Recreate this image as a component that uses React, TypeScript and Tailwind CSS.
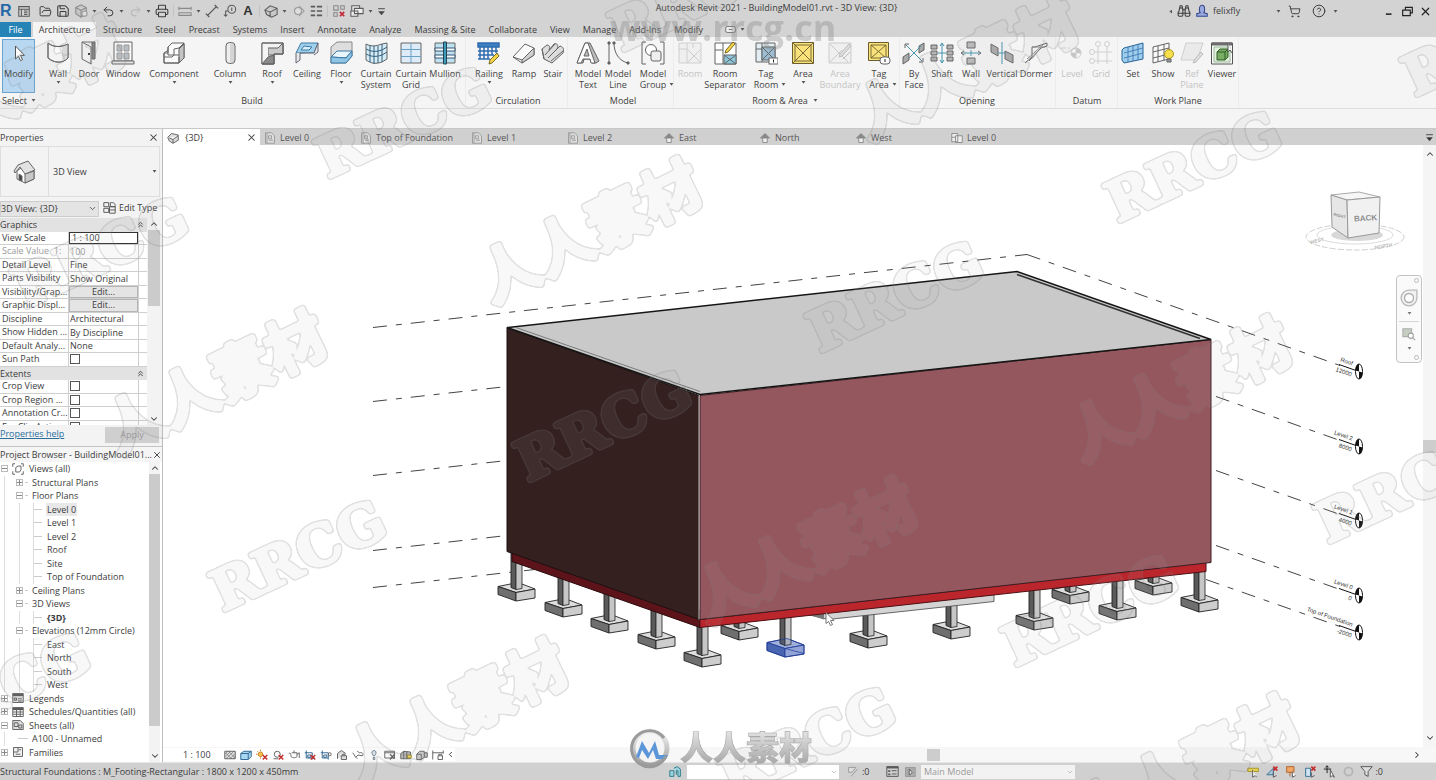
import React from "react";
import { ChevronDown, ChevronUp, ChevronRight, ChevronLeft, X, Undo2, Redo2, Printer, FolderOpen, Save, ShoppingCart, Binoculars, CircleHelp, ChevronsUp } from "lucide-react";

type Node = React.ReactNode;

/* ---------- small building blocks ---------- */

const Caret = ({ className = "" }: { className?: string }) => (
  <svg viewBox="0 0 6 4" className={`h-[3px] w-[5px] shrink-0 ${className}`} aria-hidden="true">
    <path d="M.5 0h5L3 3.500z" fill="#555" />
  </svg>
);

const Glyph = ({ children, size = "h-4 w-4" }: { children: Node; size?: string }) => (
  <svg viewBox="0 0 16 16" className={`${size} shrink-0`} fill="none" stroke="#5a5a5a" strokeWidth="1.2" aria-hidden="true">
    {children}
  </svg>
);

/* ---------- ribbon icons, drawn on a 24 unit grid ---------- */

const icons: Record<string, Node> = {
  modify: <path d="M8.500 5v13l3-2.800 2 4.500 2-1-2-4.300h4z" fill="#fff" stroke="#555" />,
  wall: (
    <>
      <path d="M2 2c6 5 14 4 20 1v14c-6 6-14 5-20 0z" fill="#fafafa" />
      <path d="M16 6l6-3v14c-2 2-4 3-6 4z" fill="#ddd" stroke="none" />
      <path d="M2 2c6 5 14 4 20 1v14c-6 6-14 5-20 0z" />
    </>
  ),
  door: (
    <>
      <path d="M5 1h13v17h-3V1" fill="#888" />
      <path d="M5 1l9 5v17l-9-5z" fill="#f5f5f5" />
      <path d="M11 13h2" stroke="#333" strokeWidth="2" />
    </>
  ),
  window: (
    <>
      <path d="M3 1h18v19H3z" fill="#fafafa" />
      <path d="M6 4h5v6H6zM13 4h5v6h-5zM6 12h5v6H6zM13 12h5v6h-5z" fill="#b9bec4" stroke="#999" />
      <path d="M1 20h22v3H1z" fill="#e6e6e6" />
    </>
  ),
  component: (
    <>
      <path d="M2 12h4V6l4-4h12v15l-5 5H2z" fill="#fafafa" />
      <path d="M17 8l5-5v14l-5 5z" fill="#c4c4c4" />
      <path d="M2 12v10h15v-6M2 12l3-2h1M6 6v8h6V8M12 14l-2 2H2M12 8l5-1 5-5M12 14h5" />
    </>
  ),
  column: (
    <>
      <rect x="8" y="1.500" width="9" height="21" rx="3.500" fill="#eee" />
      <path d="M13 2v20M15 3v18" stroke="#bbb" />
    </>
  ),
  roof: (
    <>
      <path d="M2 2h21v11h-9v10H2z" fill="#f2f2f2" />
      <path d="M8 7h10l5-5v11h-9v1l-6 0z" fill="#c9c9c9" />
      <path d="M2 23l6-6V7l-6-5z" fill="#f4f4f4" stroke="none" />
      <path d="M2 23l6-7 6-2v9z" fill="#8a8a8a" />
      <path d="M2 2h21v11h-9v10H2z" />
    </>
  ),
  ceiling: (
    <>
      <path d="M1 12l5-10h17l-4 10z" fill="#9fd0ec" stroke="#3c79a4" />
      <path d="M1 12v10l4-3v-7M5 12h14l4-10v9l-4 3" fill="#e8e8e8" stroke="#667" />
      <path d="M6 9l3-4 8 1-3 3z" fill="#d8effa" stroke="#3c79a4" />
    </>
  ),
  floor: (
    <>
      <path d="M2 16V6l6-5h15v14l-6 7H2z" fill="#dedede" stroke="#888" />
      <path d="M2 16l6-6h15l-6 7z" fill="#e8f5fb" stroke="#3c79a4" />
      <path d="M2 16v6h15l6-7v-5l-6 7z" fill="#8fc6e6" stroke="#3c79a4" />
    </>
  ),
  curtainSystem: (
    <>
      <path d="M2 3c6 3 10 2 16 0l5-1v16l-5 3c-6 2-10 2-16-2z" fill="#d5ecf7" />
      <path d="M18 3v18M6 4v17M10 5v18M14 5v17M2 8c6 3 10 3 16 1l5-3M2 13c6 3 10 3 16 1l5-3" stroke="#36607c" />
    </>
  ),
  curtainGrid: (
    <>
      <path d="M2 2h20v20H2z" fill="#ddecf8" />
      <path d="M12 2v20M2 8.500h20M2 15.500h20" stroke="#6aa0c4" />
    </>
  ),
  mullion: (
    <>
      <path d="M2 2h20v20H2z" fill="#bfe2f0" />
      <path d="M2 7h20v3H2zM2 14h20v3H2z" fill="#fff" stroke="#357" />
      <path d="M10.500 1h3v22h-3z" fill="#3f9cb8" stroke="#245" />
    </>
  ),
  railing: (
    <>
      <path d="M1 2h21v4H1zM3 6v12M7 6v12M11 6v12M15 6v8M19 6v6M1 10h20M1 14h16M1 18h12" fill="#3f7fc4" stroke="#2f6cae" strokeWidth="1.500" />
      <path d="M12 23l1-4 7-7 2 3-7 7z" fill="#f3d34a" stroke="#7a6a20" />
    </>
  ),
  ramp: (
    <>
      <path d="M1 16l12-13 9 4v7L10 22z" fill="#fafafa" />
      <path d="M10 22v-3L22 7v7z" fill="#d0d0d0" />
      <path d="M1 16l9 3" />
    </>
  ),
  stair: (
    <>
      <path d="M1 8l5-4c3 0 3 3 2 5l5-6c3-1 5 1 3 5l3-3c4 1 4 4 3 7L11 22l-8-4z" fill="#ddd" />
      <path d="M4 14L14 3M7 17L19 5M10 20L22 10M1 8l2 10" />
    </>
  ),
  modelText: (
    <>
      <path d="M1 22L9 2h5l9 18-3 2h-4l-2-4H8l-1 4z" fill="#bbb" />
      <path d="M1 22L9 2l3 0 7 20h-4l-1-4H7l-2 4zM8 15h5l-2-7z" fill="#fff" />
    </>
  ),
  modelLine: (
    <>
      <path d="M3 2v20M8 2c0 10 5 18 14 20" />
      <path d="M2 1h2v2H2zM2 21h2v2H2zM7 1h2v2H7zM21 21h2v2h-2z" fill="#555" />
    </>
  ),
  modelGroup: (
    <>
      <path d="M5 1H1v22h4M19 1h4v22h-4" />
      <circle cx="10" cy="9" r="5.500" fill="#fff" />
      <rect x="10" y="10" width="10" height="10" rx="2" fill="#eee" />
    </>
  ),
  room: <path d="M1 2h22v20H1zM9 2v20M1 8h8M9 8l14 14M23 8L9 22M15 2v5" fill="#efefef" stroke="#cfcfcf" />,
  roomSep: (
    <>
      <path d="M2 2h21v21H2zM2 9h8M10 2v21" fill="#fff" />
      <path d="M11 14h12v9H11z" fill="#8cc7dc" />
      <path d="M11 23l12-9M11 14l12 9" />
      <path d="M12 12l1-3 7-8 2 2-7 8z" fill="#f3d34a" stroke="#7a6a20" />
    </>
  ),
  tagRoom: (
    <>
      <path d="M2 2h19v19H2zM2 8h6M8 2v19" fill="#e3edf4" />
      <path d="M8 6h13v13H8z" fill="#9dbdd3" />
      <path d="M8 6l13 13M21 6L8 19" />
      <rect x="15" y="17" width="9" height="6" fill="#fff" />
      <path d="M19.500 18.500v3" stroke="#222" />
    </>
  ),
  area: (
    <>
      <path d="M1.500 1.500h21v21h-21z" fill="#f9e27c" stroke="#6b5e2c" />
      <path d="M4 4h16v16H4zM2 2l20 20M22 2L2 22" stroke="#6b5e2c" strokeWidth=".9" />
    </>
  ),
  areaBoundary: (
    <>
      <path d="M1 2h22v20H1zM2 3l18 18M14 9L2 21" fill="#efefef" stroke="#cbcbcb" />
      <path d="M11 16l1-3 9-10 2 2-9 10zM15 18l7-7" fill="#ddd" stroke="#bdbdbd" />
    </>
  ),
  tagArea: (
    <>
      <path d="M1.500 1.500h20v18h-20z" fill="#f9e27c" stroke="#6b5e2c" />
      <path d="M4 4h15v13H4zM4 4l15 13M19 4L4 17" stroke="#6b5e2c" strokeWidth=".9" />
      <rect x="13" y="16" width="10" height="7" rx="3" fill="#fff" />
      <path d="M18 18v3" stroke="#222" />
    </>
  ),
  byFace: (
    <>
      <path d="M1 16l6-4v7l-6 4zM17 5l5-3v7l-5 3z" fill="#aaa" />
      <path d="M4 4l16 16M7 17L19 5" stroke="#4794ad" />
      <path d="M3 3h4M3 3v4M21 21h-4M21 21v-4" />
    </>
  ),
  shaft: (
    <>
      <path d="M1 4h6v4H1zM1 10h6v4H1zM1 16h6v4H1zM17 4h6v4h-6zM17 10h6v4h-6zM17 16h6v4h-6z" fill="#b5b5b5" />
      <path d="M12 2v20M8 12h8" stroke="#4794ad" />
      <path d="M10 5l2-3 2 3M10 19l2 3 2-3" stroke="#4794ad" />
    </>
  ),
  openWall: (
    <>
      <path d="M8 1h8v6H8zM8 17h8v6H8z" fill="#bbb" />
      <path d="M3 12h18M12 9v6" stroke="#4794ad" />
      <path d="M5 10l-3 2 3 2M19 10l3 2-3 2" />
    </>
  ),
  vertical: (
    <>
      <path d="M1 3l7 4v8l-7-4zM15 10l8 4v8l-8-4z" fill="#aaa" />
      <path d="M12 1v22M8 12h8" stroke="#4794ad" />
    </>
  ),
  dormer: (
    <>
      <path d="M1 22l7-6V6h3l12-4v3l-6 2L5 20" />
      <path d="M8 6h13M3 18L20 3" stroke="#888" />
    </>
  ),
  level: (
    <g stroke="#cfcfcf">
      <path d="M1 7h5M8 7h2" />
      <circle cx="16" cy="12" r="5" />
      <path d="M16 7v5h5a5 5 0 0 0-5-5zM16 17v-5h-5a5 5 0 0 0 5 5z" fill="#c4c4c4" />
    </g>
  ),
  grid: (
    <g stroke="#cfcfcf">
      <circle cx="9" cy="3" r="2.500" />
      <circle cx="18" cy="3" r="2.500" />
      <circle cx="3" cy="11" r="2.500" />
      <circle cx="3" cy="20" r="2.500" />
      <path d="M9 6v17M18 6v17M6 11h17M6 20h17" />
    </g>
  ),
  set: (
    <>
      <path d="M3 7l19-5v16L3 22l-2-3V9z" fill="#9fcdee" stroke="#27659a" />
      <path d="M7 6v15M12 5v15M17 3v16M3 12l19-5M3 17l19-5" stroke="#3f7cb0" strokeWidth=".9" />
    </>
  ),
  show: (
    <>
      <path d="M2 6l16-4v16L2 22zM7 5v16M13 3v16M2 11l16-4M2 17l16-4" fill="#fafafa" />
      <circle cx="18" cy="13" r="4.500" fill="#f7e04c" stroke="#aa9420" />
      <path d="M16 18h4v3h-4z" fill="#999" />
    </>
  ),
  refPlane: (
    <>
      <path d="M6 2h17l-6 17H1z" fill="#eaeaea" stroke="#cfcfcf" />
      <path d="M13 22l2-4 6-7 2 2-7 8z" fill="#ddd" stroke="#bdbdbd" />
    </>
  ),
  viewer: (
    <>
      <path d="M1.500 2h21v21h-21z" fill="#fafafa" stroke="#555" />
      <path d="M2 2h20v2H2z" fill="#777" />
      <path d="M4 6h16v15H4z" fill="#e1efdc" stroke="#9b9" />
      <path d="M7 11l3-3h8v8l-3 3H7z" fill="#77ac62" stroke="#2f5c24" />
      <path d="M7 11h8v8M15 11l3-3" stroke="#2f5c24" />
      <path d="M18 2v9l2-2 2 3" stroke="#555" fill="#fff" />
    </>
  ),
};

type Tool = { icon: string; label: string[]; w: string; drop?: "below" | "side"; off?: boolean };
type Panel = { title: string; pad: string; tools: Tool[]; menu?: boolean };

const panels: Panel[] = [
  {
    title: "Build", pad: "pl-[5px] pr-[3px]",
    tools: [
      { icon: "wall", label: ["Wall"], w: "w-8", drop: "below" },
      { icon: "door", label: ["Door"], w: "w-[30px]" },
      { icon: "window", label: ["Window"], w: "w-[38px]" },
      { icon: "component", label: ["Component"], w: "w-16", drop: "below" },
      { icon: "column", label: ["Column"], w: "w-12", drop: "below" },
      { icon: "roof", label: ["Roof"], w: "w-9", drop: "below" },
      { icon: "ceiling", label: ["Ceiling"], w: "w-[34px]" },
      { icon: "floor", label: ["Floor"], w: "w-[34px]", drop: "below" },
      { icon: "curtainSystem", label: ["Curtain", "System"], w: "w-9" },
      { icon: "curtainGrid", label: ["Curtain", "Grid"], w: "w-[34px]" },
      { icon: "mullion", label: ["Mullion"], w: "w-[34px]" },
    ],
  },
  {
    title: "Circulation", pad: "pl-1 pr-px",
    tools: [
      { icon: "railing", label: ["Railing"], w: "w-[38px]", drop: "below" },
      { icon: "ramp", label: ["Ramp"], w: "w-8" },
      { icon: "stair", label: ["Stair"], w: "w-[26px]" },
    ],
  },
  {
    title: "Model", pad: "pl-[5px]",
    tools: [
      { icon: "modelText", label: ["Model", "Text"], w: "w-[30px]" },
      { icon: "modelLine", label: ["Model", "Line"], w: "w-[30px]" },
      { icon: "modelGroup", label: ["Model", "Group"], w: "w-10", drop: "side" },
    ],
  },
  {
    title: "Room & Area", pad: "pr-[3px]", menu: true,
    tools: [
      { icon: "room", label: ["Room"], w: "w-8", off: true },
      { icon: "roomSep", label: ["Room", "Separator"], w: "w-[38px]" },
      { icon: "tagRoom", label: ["Tag", "Room"], w: "w-11", drop: "side" },
      { icon: "area", label: ["Area"], w: "w-[30px]", drop: "below" },
      { icon: "areaBoundary", label: ["Area", "Boundary"], w: "w-11", off: true },
      { icon: "tagArea", label: ["Tag", "Area"], w: "w-[34px]", drop: "side" },
    ],
  },
  {
    title: "Opening", pad: "pr-px",
    tools: [
      { icon: "byFace", label: ["By", "Face"], w: "w-7" },
      { icon: "shaft", label: ["Shaft"], w: "w-7" },
      { icon: "openWall", label: ["Wall"], w: "w-[30px]" },
      { icon: "vertical", label: ["Vertical"], w: "w-8" },
      { icon: "dormer", label: ["Dormer"], w: "w-9" },
    ],
  },
  {
    title: "Datum", pad: "pl-[2px] pr-px",
    tools: [
      { icon: "level", label: ["Level"], w: "w-7", off: true },
      { icon: "grid", label: ["Grid"], w: "w-[30px]", off: true },
    ],
  },
  {
    title: "Work Plane", pad: "",
    tools: [
      { icon: "set", label: ["Set"], w: "w-[30px]" },
      { icon: "show", label: ["Show"], w: "w-[30px]" },
      { icon: "refPlane", label: ["Ref", "Plane"], w: "w-7", off: true },
      { icon: "viewer", label: ["Viewer"], w: "w-8" },
    ],
  },
];

function ToolButton({ tool }: { tool: Tool }) {
  return (
    <button type="button" disabled={tool.off} className={`flex h-[56px] shrink-0 flex-col items-center leading-[11px] ${tool.w} ${tool.off ? "text-[#c4c4c4]" : "text-[#444]"}`}>
      <svg viewBox="0 0 24 24" className="mt-1 mb-[3px] h-6 w-6 shrink-0" fill="none" stroke="#646464" aria-hidden="true">
        {icons[tool.icon]}
      </svg>
      {tool.label.map((line, i) => (
        <span key={line} className="flex items-center justify-center whitespace-nowrap">
          {line}
          {tool.drop === "side" && i === 1 && <Caret className="-mr-2 ml-[3px]" />}
        </span>
      ))}
      {tool.drop === "below" && <Caret className="mt-[2px]" />}
    </button>
  );
}

function Ribbon() {
  return (
    <div className="flex h-[72px] shrink-0 border-b border-[#dcdcdc] bg-[#f5f5f5]">
      <div className="flex w-[37px] shrink-0 flex-col pl-[2px]">
        <button type="button" className="mt-[2px] flex h-[54px] w-[33px] flex-col items-center border border-[#6ba3cf] bg-[#b8d8f2] leading-[11px]">
          <svg viewBox="0 0 24 24" className="mt-px mb-[3px] h-6 w-6 shrink-0" fill="none" aria-hidden="true">{icons.modify}</svg>
          Modify
        </button>
        <button type="button" className="flex h-[15px] items-center gap-1 leading-[15px] whitespace-nowrap">Select<Caret /></button>
      </div>
      {panels.map((p) => (
        <section key={p.title} aria-label={p.title} className={`flex shrink-0 flex-col border-r border-[#ececec] ${p.pad}`}>
          <div className="flex">{p.tools.map((t) => <ToolButton key={t.icon} tool={t} />)}</div>
          <div className="flex h-[15px] items-center justify-center gap-[5px] leading-[15px]">
            {p.title}
            {p.menu && <Caret />}
          </div>
        </section>
      ))}
    </div>
  );
}

/* ---------- title bar ---------- */

const Tip = ({ label, children, w = "w-[18px]" }: { label: string; children?: Node; w?: string }) => (
  <button type="button" aria-label={label} className={`flex h-[18px] shrink-0 items-center justify-center ${w}`}>{children}</button>
);
const Drop = ({ label }: { label: string }) => <Tip label={label} w="w-[9px]"><Caret /></Tip>;
const Rule = () => <span className="mx-[2px] h-3 w-px shrink-0 bg-[#c2c2c2]" />;

function TitleBar() {
  return (
    <header className="flex h-[22px] shrink-0 items-center bg-[#d3d3d3]">
      <div className="flex items-center">
        <span className="w-[15px] font-['Liberation_Sans'] text-[16px] leading-[18px] font-bold text-[#2468a8]">R</span>
        <Tip label="Home"><Glyph size="h-[14px] w-[14px]"><path d="M2 3h12v11H2zM2 6h12M5 6v8M8 8h4M8 10h4M8 12h4" /></Glyph></Tip>
        <span className="w-[3px]" />
        <Tip label="Open"><FolderOpen size={13} strokeWidth={1.8} /></Tip>
        <Tip label="Save"><Save size={14} strokeWidth={1.8} /></Tip>
        <Tip label="Synchronize"><Glyph size="h-[14px] w-[14px]"><path d="M2 4l6-3 6 3v7l-6 4-6-4zM2 4l6 3 6-3M8 7v8" stroke="#8a8a8a" fill="#c4c4c4" /><circle cx="12" cy="11" r="3" fill="#ddd" stroke="#9a9a9a" /></Glyph></Tip>
        <Drop label="Synchronize options" />
        <Tip label="Undo"><Undo2 size={13} strokeWidth={1.8} /></Tip>
        <Drop label="Undo history" />
        <Tip label="Redo"><Redo2 size={13} strokeWidth={1.8} color="#b2b2b2" /></Tip>
        <Drop label="Redo history" />
        <Tip label="Print"><Printer size={14} strokeWidth={1.8} /></Tip>
        <Rule />
        <Tip label="Measure"><Glyph size="h-[14px] w-[14px]"><path d="M1 3v4M15 3v4M1 5h14M1 10h14v3H1z" stroke="#8a8a8a" /></Glyph></Tip>
        <Drop label="Measure options" />
        <Tip label="Aligned dimension"><Glyph size="h-[14px] w-[14px]"><path d="M3 13L13 3M1 11l4 4M11 1l4 4" strokeWidth="1.600" /></Glyph></Tip>
        <Tip label="Tag by category"><Glyph size="h-[14px] w-[14px]"><circle cx="10" cy="6" r="4.500" /><path d="M10 4v4M6 8H3v5M1 12l2 2 2-2" /></Glyph></Tip>
        <Tip label="Text"><span className="font-['Liberation_Sans'] text-[13px] font-bold text-[#333]">A</span></Tip>
        <Rule />
        <Tip label="Default 3D view"><Glyph size="h-[14px] w-[14px]"><path d="M1 7l6-5 8 3v7l-6 3-6-3zM1 7l6 2 8-4M7 9v6" fill="#c8c8c8" /></Glyph></Tip>
        <Drop label="3D view options" />
        <Tip label="Section"><Glyph size="h-[14px] w-[14px]"><circle cx="8" cy="8" r="4" fill="#ddd" stroke="#999" /><path d="M9 2l6 6-6 6" stroke="#999" /></Glyph></Tip>
        <Tip label="Thin lines"><Glyph size="h-[14px] w-[14px]"><path d="M2 3h5M9 3h6M2 8h5M9 8h6M2 13h5M9 13h6" strokeWidth="1.800" /></Glyph></Tip>
        <Rule />
        <Tip label="Close inactive views"><Glyph size="h-[14px] w-[14px]"><path d="M2 2h5v5H2zM10 2h4v4h-4zM2 10h4v4H2z" stroke="#888" /><path d="M9 9l5 5M14 9l-5 5" stroke="#c22a3a" strokeWidth="2" /></Glyph></Tip>
        <Tip label="Switch windows"><Glyph size="h-[14px] w-[14px]"><path d="M2 8V2h9v3M5 5h10v6H5zM1 8h8v6H1z" fill="#eee" /></Glyph></Tip>
        <Drop label="Windows list" />
        <Tip label="Customize toolbar" w="w-3"><Glyph size="h-[9px] w-[9px]"><path d="M2 3h12" strokeWidth="2" /><path d="M3 8h10l-5 6z" fill="#444" /></Glyph></Tip>
      </div>
      <h1 className="mb-[6px] min-w-0 flex-1 truncate text-center leading-[14px]">Autodesk Revit 2021 - BuildingModel01.rvt - 3D View: {"{3D}"}</h1>
      <div className="flex items-center pr-[2px]">
        <Tip label="Collapse search" w="w-[9px]"><Caret className="rotate-90" /></Tip>
        <Tip label="Search"><Binoculars size={14} strokeWidth={1.8} /></Tip>
        <Tip label="Account"><Glyph size="h-[14px] w-[14px]"><path d="M5 6c0-6 6-6 6 0 0 3-1 4-1 4l4 1v3H2v-3l4-1S5 9 5 6z" fill="#9aa9dd" stroke="#34478e" /></Glyph></Tip>
        <button type="button" className="flex h-[18px] w-[70px] items-center justify-between pl-[2px]">felixfly<Caret /></button>
        <Tip label="App store" w="w-[26px]"><ShoppingCart size={13} strokeWidth={1.7} /></Tip>
        <Tip label="Help" w="w-6"><CircleHelp size={14} strokeWidth={1.7} /></Tip>
        <Drop label="Help menu" />
        <span className="w-10" />
        <Tip label="Minimize"><Glyph size="h-[10px] w-[10px]"><path d="M3 13h9" strokeWidth="2.500" stroke="#222" /></Glyph></Tip>
        <Tip label="Restore"><Glyph size="h-[11px] w-[11px]"><path d="M5 5V2h10v8h-3M1 6h11v8H1z" stroke="#222" strokeWidth="1.700" /></Glyph></Tip>
        <Tip label="Close"><X size={13} strokeWidth={2.2} color="#222" /></Tip>
      </div>
    </header>
  );
}

const menu = ["Structure", "Steel", "Precast", "Systems", "Insert", "Annotate", "Analyze", "Massing & Site", "Collaborate", "View", "Manage", "Add-Ins", "Modify"];

function MenuTabs() {
  return (
    <nav className="flex h-[15px] shrink-0 items-stretch bg-[#d3d3d3] leading-[15px] whitespace-nowrap">
      <button type="button" className="mr-[2px] w-[31px] bg-[#2583b6] text-white">File</button>
      <button type="button" className="w-[63px] bg-[#f5f5f5]">Architecture</button>
      {menu.map((m) => <button key={m} type="button" className="pr-[6px] pl-[7px]">{m}</button>)}
      <button type="button" aria-label="Ribbon display" className="ml-4 flex items-center gap-1">
        <svg viewBox="0 0 12 8" className="h-[7px] w-[11px]" fill="#eee" stroke="#666"><rect x=".5" y=".5" width="11" height="7" rx="2" /><path d="M4 4h4" /></svg>
        <Caret />
      </button>
    </nav>
  );
}

/* ---------- properties palette ---------- */

type Prop = { name: string; kind: "head" | "scale" | "off" | "text" | "edit" | "check"; value?: string };
const props: Prop[] = [
  { name: "Graphics", kind: "head" },
  { name: "View Scale", kind: "scale", value: "1 : 100" },
  { name: "Scale Value  1:", kind: "off", value: "100" },
  { name: "Detail Level", kind: "text", value: "Fine" },
  { name: "Parts Visibility", kind: "text", value: "Show Original" },
  { name: "Visibility/Grap...", kind: "edit" },
  { name: "Graphic Displ...", kind: "edit" },
  { name: "Discipline", kind: "text", value: "Architectural" },
  { name: "Show Hidden ...", kind: "text", value: "By Discipline" },
  { name: "Default Analy...", kind: "text", value: "None" },
  { name: "Sun Path", kind: "check" },
  { name: "Extents", kind: "head" },
  { name: "Crop View", kind: "check" },
  { name: "Crop Region ...", kind: "check" },
  { name: "Annotation Cr...", kind: "check" },
  { name: "Far Clip Active", kind: "check" },
];

function PropRow({ p }: { p: Prop }) {
  const id = `prop-${p.name.replace(/\W+/g, "-")}`;
  if (p.kind === "head")
    return (
      <div className="flex items-center justify-between bg-[#e2e2e2] pr-[2px]">
        {p.name}
        <ChevronsUp size={9} strokeWidth={2.5} />
      </div>
    );
  return (
    <div className={`flex border-b border-[#cfcfcf] bg-white ${p.kind === "off" ? "text-[#999]" : ""}`}>
      <label htmlFor={id} className="w-[69px] shrink-0 border-r border-[#cfcfcf] pl-[2px] whitespace-pre">{p.name}</label>
      <div className="flex w-[70px] shrink-0 items-center border-r border-[#cfcfcf]">
        {p.kind === "edit" ? (
          <button id={id} type="button" className="h-full w-full border border-[#b5b5b5] bg-[#e4e4e4] leading-[10px]">Edit...</button>
        ) : p.kind === "check" ? (
          <input id={id} type="checkbox" className="ml-px h-[10px] w-[10px] appearance-none border border-[#555] bg-white" />
        ) : (
          <input
            id={id}
            defaultValue={p.value}
            disabled={p.kind === "off"}
            className={`h-full w-full min-w-0 bg-white ${p.kind === "scale" ? "border border-[#333] pl-[2px]" : "pl-px"}`}
          />
        )}
      </div>
    </div>
  );
}

const ScrollV = ({ thumb, className = "" }: { thumb: string; className?: string }) => (
  <div className={`flex shrink-0 flex-col items-center bg-[#f3f3f3] ${className}`}>
    <ChevronUp size={10} strokeWidth={2.5} className="my-px shrink-0" />
    <div className={`w-full bg-[#cbcbcb] ${thumb}`} />
    <div className="flex-1" />
    <ChevronDown size={10} strokeWidth={2.5} className="my-px shrink-0" />
  </div>
);

function Properties() {
  return (
    <section aria-label="Properties" className="flex shrink-0 flex-col border-b border-[#c4c4c4] bg-[#f3f3f3]">
      <div className="flex h-[17px] items-center justify-between pr-[3px]">
        <h2>Properties</h2>
        <button type="button" aria-label="Close properties"><X size={11} strokeWidth={2.2} /></button>
      </div>
      <button type="button" className="mr-[2px] flex h-[51px] items-center border border-[#dedede] pr-[2px] text-left">
        <span className="flex h-full w-12 items-center justify-center border-r border-[#dedede]">
          <svg viewBox="0 0 24 24" className="h-6 w-6" fill="none" stroke="#666" aria-hidden="true">
            <path d="M4 11v8l8 4 9-4v-8l-6-8z" fill="#fff" />
            <path d="M12 14v9l9-4v-8z" fill="#c8c8c8" />
            <path d="M1 11l4-6 10-4 7 9-10 4-5-7-5 6z" fill="#e2e2e2" />
            <path d="M6 14l3 2v5l-3-1z" fill="#444" />
          </svg>
        </span>
        <span className="ml-1 flex-1">3D View</span>
        <Caret />
      </button>
      <div className="flex h-[21px] items-center">
        <div className="mt-[2px] flex h-[16px] w-[99px] items-center border border-[#cdcdcd] bg-[#e4e4e4]">
          <select aria-label="Instance" className="h-full min-w-0 flex-1 appearance-none">
            <option>3D View: {"{3D}"}</option>
          </select>
          <ChevronDown size={9} className="mr-px" />
        </div>
        <button type="button" className="ml-1 flex items-center gap-[3px] whitespace-nowrap">
          <Glyph size="h-[13px] w-[13px]"><path d="M1 2h6v5H1zM9 2c5 0 6 0 6 5H9zM1 9h6v5H1zM8 7h7v8H8zM8 11h7" /></Glyph>
          Edit Type
        </button>
      </div>
      <div className="flex h-[207px] overflow-hidden">
        <div className="grid h-[216px] w-[147px] shrink-0 grid-rows-[repeat(16,minmax(0,1fr))] leading-[11px]">
          {props.map((p) => <PropRow key={p.name} p={p} />)}
        </div>
        <ScrollV thumb="h-[76px]" className="ml-px w-[12px]" />
      </div>
      <div className="flex h-[21px] items-center justify-between bg-[#f3f3f3] pr-[3px]">
        <a href="#help" className="mb-1 text-[#2a6f9c] underline">Properties help</a>
        <button type="button" disabled className="mb-[2px] h-[16px] w-[54px] bg-[#cfcfcf] text-[#999]">Apply</button>
      </div>
    </section>
  );
}

/* ---------- project browser ---------- */

type Row = { t: string; d: number; x?: "+" | "-"; icon?: Node; sel?: boolean; bold?: boolean };
const rows: Row[] = [
  { t: "Views (all)", d: 0, x: "-", icon: <path d="M1 5V1h3M12 1h3v4M15 11v4h-3M4 15H1v-4M5 6l3-2h4v5l-2 3H5z" /> },
  { t: "Structural Plans", d: 1, x: "+" },
  { t: "Floor Plans", d: 1, x: "-" },
  { t: "Level 0", d: 2, sel: true },
  { t: "Level 1", d: 2 },
  { t: "Level 2", d: 2 },
  { t: "Roof", d: 2 },
  { t: "Site", d: 2 },
  { t: "Top of Foundation", d: 2 },
  { t: "Ceiling Plans", d: 1, x: "+" },
  { t: "3D Views", d: 1, x: "-" },
  { t: "{3D}", d: 2, bold: true },
  { t: "Elevations (12mm Circle)", d: 1, x: "-" },
  { t: "East", d: 2 },
  { t: "North", d: 2 },
  { t: "South", d: 2 },
  { t: "West", d: 2 },
  { t: "Legends", d: 0, x: "+", icon: <><path d="M1 2h14v12H1z" fill="#ddd" /><path d="M1 4h14" strokeWidth="3" /><path d="M3 8h3v3H3zM8 9h5M8 12h5" /></> },
  { t: "Schedules/Quantities (all)", d: 0, x: "+", icon: <><path d="M1 2h14v12H1zM1 8h14M1 11h14M6 5v9M11 5v9" /><path d="M1 4h14" strokeWidth="3" /></> },
  { t: "Sheets (all)", d: 0, x: "-", icon: <path d="M1 2h10l4 4v8H1zM3 5h5v5H3zM9 8h4v4H9z" fill="#ddd" /> },
  { t: "A100 - Unnamed", d: 1 },
  { t: "Families", d: 0, x: "+", icon: <path d="M2 2h12v12H2zM8 2v6H2M9 5h3M5 11h6" fill="#eee" /> },
];

function TreeRow({ r }: { r: Row }) {
  const box = (
    <span className="flex h-[7px] w-[7px] shrink-0 items-center justify-center border border-[#bbb] bg-white">
      <svg viewBox="0 0 5 5" className="h-[5px] w-[5px]" stroke="#888"><path d={r.x === "+" ? "M0 2.500h5M2.500 0v5" : "M0 2.500h5"} /></svg>
    </span>
  );
  return (
    <li className="flex items-center whitespace-nowrap">
      {r.d === 0 && (
        <>
          <span className="flex w-[12px] shrink-0 pl-px">{box}</span>
          <span className="flex w-[16px] shrink-0"><Glyph size="h-3 w-3">{r.icon}</Glyph></span>
        </>
      )}
      {r.d === 1 && (
        <>
          <span className="ml-[4px] h-full w-px bg-[#ddd]" />
          {r.x ? (
            <>
              <span className="ml-[11px]">{box}</span>
              <span className="mr-[3px] ml-[2px] h-px w-[3px] bg-[#ccc]" />
            </>
          ) : (
            <span className="mr-[3px] ml-[13px] h-px w-[10px] bg-[#ccc]" />
          )}
        </>
      )}
      {r.d === 2 && (
        <>
          <span className="ml-[4px] h-full w-px bg-[#ddd]" />
          <span className="ml-[14px] h-full w-px bg-[#ddd]" />
          <span className="ml-[13px] h-full w-px bg-[#ddd]" />
          <span className="mr-1 h-px w-[8px] bg-[#ccc]" />
        </>
      )}
      <span className={`${r.sel ? "bg-[#e8e8e8] px-px" : "px-px"} ${r.bold ? "font-bold" : ""}`}>{r.t}</span>
    </li>
  );
}

function Browser() {
  return (
    <section aria-label="Project Browser" className="flex min-h-0 flex-1 flex-col bg-white">
      <div className="flex h-[15px] shrink-0 items-center justify-between bg-[#f5f5f5]">
        <h2 className="whitespace-nowrap">Project Browser - BuildingModel01...</h2>
        <button type="button" aria-label="Close project browser" className="shrink-0"><X size={10} strokeWidth={2.2} /></button>
      </div>
      <div className="flex min-h-0 flex-1 overflow-hidden">
        <ul className="grid h-[297px] w-[149px] shrink-0 grid-rows-[repeat(22,minmax(0,1fr))] leading-[13px]">
          {rows.map((r) => <TreeRow key={r.t + r.d} r={r} />)}
        </ul>
        <ScrollV thumb="h-[252px]" className="w-[11px]" />
      </div>
    </section>
  );
}

/* ---------- drawing area ---------- */

const PlanIcon = () => <Glyph size="h-3 w-3"><path d="M2 1h8l4 4v10H2zM4 1v14M6 5h4v4H6zM7 11h5" stroke="#999" fill="#ddd" /></Glyph>;
const ElevIcon = () => <Glyph size="h-3 w-3"><path d="M2 8l6-6 6 6z" fill="#888" stroke="#888" /><path d="M5 8h6v6H5z" fill="#eee" stroke="#888" /></Glyph>;
const views: { t: string; i: Node; w: string }[] = [
  { t: "Level 0", i: <PlanIcon />, w: "w-24" },
  { t: "Top of Foundation", i: <PlanIcon />, w: "w-[111px]" },
  { t: "Level 1", i: <PlanIcon />, w: "w-24" },
  { t: "Level 2", i: <PlanIcon />, w: "w-24" },
  { t: "East", i: <ElevIcon />, w: "w-24" },
  { t: "North", i: <ElevIcon />, w: "w-24" },
  { t: "West", i: <ElevIcon />, w: "w-24" },
  { t: "Level 0", i: <Glyph size="h-3 w-3"><path d="M1 2h8v11H1zM6 5h9v9H6zM1 7h5" fill="#eee" stroke="#888" /></Glyph>, w: "w-24" },
];

function ViewTabs() {
  return (
    <div className="flex h-4 shrink-0 items-stretch bg-[#d0d0d0] leading-4">
      <div className="flex w-[97px] items-center bg-white pr-[3px] pl-1">
        <button type="button" className="flex flex-1 items-center gap-[6px] pt-px">
          <Glyph size="h-3 w-3"><path d="M1 7l5-5 9 2v7l-7 4-5-3zM3 8l5 2 7-5M8 10v5" fill="#ddd" /></Glyph>
          {"{3D}"}
        </button>
        <button type="button" aria-label="Close view"><X size={11} strokeWidth={2.2} /></button>
      </div>
      {views.map((v, i) => (
        <button key={i} type="button" className={`flex items-center gap-1 pt-px pl-1 whitespace-nowrap text-[#555] ${v.w}`}>{v.i}{v.t}</button>
      ))}
      <span className="flex-1" />
      <button type="button" aria-label="Open views" className="pr-[2px]"><Glyph size="h-[9px] w-[9px]"><path d="M2 3h12" strokeWidth="2" /><path d="M3 8h10l-5 6z" fill="#333" /></Glyph></button>
    </div>
  );
}

type Foot = { x: number; y: number; blue?: boolean };
const footings: Foot[] = [
  { x: 721, y: 625 }, { x: 1052, y: 589 }, { x: 1135, y: 580 },
  { x: 498, y: 586 }, { x: 545, y: 602 }, { x: 591, y: 618 }, { x: 638, y: 634 }, { x: 684, y: 652 },
  { x: 767, y: 642, blue: true }, { x: 850, y: 633 }, { x: 933, y: 624 }, { x: 1016, y: 615 }, { x: 1099, y: 605 }, { x: 1181, y: 597 },
];

function Footing({ f }: { f: Foot }) {
  const c = f.blue ? { l: "#4c68b4", r: "#a9b8e4", t: "#b9c6ea", s: "#1f3a94" } : { l: "#6f6f6f", r: "#cdcdcd", t: "#dedede", s: "#222" };
  return (
    <g transform={`translate(${f.x} ${f.y})`} stroke={c.s} strokeWidth=".9" strokeLinejoin="round">
      <path d="M0 0L20-4L37 2.500L18 6z" fill={c.t} />
      <path d="M0 0L18 6V14.500L0 8z" fill={c.l} />
      <path d="M18 6L37 2.500V11.500L18 14.500z" fill={c.r} />
      <path d="M13-42h5V3L13 1z" fill="#5a5a5a" stroke="#222" />
      <path d="M18-42h6V2L18 3z" fill="#c6c6c6" stroke="#333" />
      {f.blue && <path d="M0 0L20-4L37 2.500V11.500L18 14.500L0 8zM18 6L37 11" fill="#3e5ba8" fillOpacity=".2" strokeWidth=".7" />}
    </g>
  );
}

const heads = [
  { y: 371, n: "Roof", v: "12000", x0: 1027, y0: 254 },
  { y: 446, n: "Level 2", v: "8000", x0: 1216, y0: 396 },
  { y: 520, n: "Level 1", v: "4000", x0: 1216, y0: 470 },
  { y: 595, n: "Level 0", v: "0", x0: 1216, y0: 545 },
  { y: 632, n: "Top of Foundation", v: "-2000", x0: 1206, y0: 579 },
];

function Model() {
  return (
    <svg viewBox="163 145 1260 601" className="h-full w-full" aria-label="3D view of the building">
      <g stroke="#444" fill="none" strokeDasharray="14 9 6 9">
        <path d="M373 327L1027 254" />
        <path d="M373 401L507 386M373 475L507 460M373 550L507 535M373 587L535 569" />
        {heads.map((h) => <path key={h.n} d={`M${h.x0} ${h.y0}L1340 ${h.y - 6}`} />)}
      </g>
      {footings.map((f, i) => <Footing key={i} f={f} />)}
      <path d="M808 614L994 594V601L828 619z" fill="#d4d4d4" stroke="#444" strokeWidth=".8" />
      <path d="M808 614L824 612V619z" fill="#777" />
      <path d="M512 551L700 619V627L512 561z" fill="#5c141a" stroke="#2a0a0c" />
      <path d="M700 619L1206 562V571L700 627z" fill="#bb262c" stroke="#4c1014" />
      <path d="M507 327L699 395V619L507 551z" fill="#33201f" stroke="#1c1010" />
      <path d="M700 395L1211 339V562L700 619z" fill="#95575e" stroke="#3b1d22" />
      <path d="M507 327L1017 271L1211 339L700 394z" fill="#c9c9c9" stroke="#151515" strokeWidth="1.500" />
      <path d="M516 327L700 391" fill="none" stroke="#666" strokeWidth=".8" />
      <path d="M1017 274L1200 338" stroke="#333" strokeWidth="1.500" />
      <path d="M699 395V619" stroke="#cfc4c4" />
      {heads.map((h) => (
        <g key={h.n}>
          <g fill="#333" fontFamily="'Liberation Sans Narrow', 'Liberation Sans', sans-serif" fontSize="6" textAnchor="end">
            <text transform={`translate(1352 ${h.y - 6}) rotate(19)`}>{h.n}</text>
            <text transform={`translate(1351 ${h.y + 5}) rotate(19)`}>{h.v}</text>
          </g>
          <path d={`M1339 ${h.y - 7}L1356 ${h.y - 1}`} stroke="#111" />
          <ellipse cx="1359" cy={h.y} rx="3.500" ry="7.500" fill="#fff" stroke="#111" />
          <path d={`M1359 ${h.y - 7.5}V${h.y}L1355.500 ${h.y - 1}Q1355.500 ${h.y - 7} 1359 ${h.y - 7.5}M1359 ${h.y + 7.5}V${h.y}L1362.500 ${h.y + 1}Q1362.500 ${h.y + 7} 1359 ${h.y + 7.5}`} fill="#111" />
        </g>
      ))}
      <path d="M826 612v11l2.500-2 2 4 2-1-2-4h3.500z" fill="#fff" stroke="#555" strokeWidth=".8" />
    </svg>
  );
}

function ViewCube() {
  return (
    <svg viewBox="0 0 104 64" className="absolute top-[44px] right-[16px] h-16 w-[104px]" fill="none" aria-label="View cube">
      <ellipse cx="52" cy="48" rx="49" ry="13" stroke="#cfcfcf" strokeDasharray="6 2" />
      <ellipse cx="52" cy="46" rx="38" ry="9" stroke="#dcdcdc" />
      <ellipse cx="54" cy="46" rx="26" ry="6" fill="#d8d8d8" />
      <path d="M28 6L56 3L77 8L44 11z" fill="#f6f6f6" stroke="#aaa" />
      <path d="M28 6L44 11L45 49L29 38z" fill="#e6e6e6" stroke="#999" />
      <path d="M44 11L77 8L76 44L45 49z" fill="#f1f1f1" stroke="#999" />
      <g fill="#8f8f8f" fontFamily="'Liberation Sans Narrow', 'Liberation Sans', sans-serif" fontWeight="700">
        <text x="51" y="32" fontSize="8" transform="rotate(-4 60 30)">BACK</text>
        <text x="30" y="28" fontSize="4" transform="rotate(14 36 28)">RIGHT</text>
        <text x="7" y="55" fontSize="5" transform="rotate(-14 8 54)" fill="#bbb">WEST</text>
        <text x="72" y="60" fontSize="5" transform="rotate(-10 74 60)" fill="#bbb">NORTH</text>
      </g>
    </svg>
  );
}

function NavBar() {
  return (
    <div className="absolute top-[130px] right-px flex h-[88px] w-[26px] flex-col items-center justify-between rounded border border-[#b5b5b5] bg-[#fafafa] py-[2px] opacity-80">
      <span className="mr-[2px] h-[5px] w-[5px] self-end rounded-full border border-[#aaa]" />
      <button type="button" aria-label="Steering wheel"><Glyph size="h-[18px] w-[18px]"><path d="M8 1h7v7a7 7 0 1 1-7-7z" stroke="#aaa" fill="#eee" /><circle cx="8" cy="8" r="4" stroke="#999" fill="#fff" /></Glyph></button>
      <Caret />
      <span className="h-px w-5 bg-[#ccc]" />
      <button type="button" aria-label="Zoom region"><Glyph size="h-[14px] w-[14px]"><path d="M1 2h10v9H1z" fill="#b9c2b4" stroke="#999" /><circle cx="10" cy="10" r="3" fill="#fff" stroke="#888" /><path d="M12 12l3 3" stroke="#888" /></Glyph></button>
      <Caret />
      <span className="mr-[2px] h-[5px] w-[5px] self-end rounded-full border border-[#aaa]" />
    </div>
  );
}

const red = <path d="M9 8l6 6M15 8l-6 6" stroke="#c62d2d" strokeWidth="2" />;
const viewControls: { n: string; g: Node }[] = [
  { n: "Detail level", g: <><path d="M1 3h14v10H1z" fill="#ddd" /><path d="M2 6l3-3M2 10l7-7M3 13L13 3M8 13l7-7M12 13l3-3M2 5l8 8M6 3l9 9" strokeWidth=".7" /></> },
  { n: "Visual style", g: <path d="M1 6l4-3h10v7l-4 4H1zM1 6h10v8M11 6l4-3" fill="#a9d6f2" stroke="#27608c" /> },
  { n: "Sun path", g: <><circle cx="6" cy="7" r="3" fill="#f5c451" stroke="#c4781c" /><path d="M6 1v2M6 11v2M0 7h2M2 3l1 1" stroke="#c4781c" />{red}</> },
  { n: "Shadows", g: <><circle cx="7" cy="7" r="4" /><path d="M2 13h6" />{red}</> },
  { n: "Rendering", g: <path d="M1 6c3-2 3 3 3 4s6 3 8 0V5H5M8 2v3M12 7l3-2v7" /> },
  { n: "Crop view", g: <><path d="M3 2v10h11M1 5h10v9M5 8h4v3H5z" stroke="#27608c" />{red}</> },
  { n: "Crop region", g: <><path d="M3 2v10h8M1 5h10v9M5 8h4v3H5z" stroke="#27608c" /><circle cx="13" cy="7" r="2" /></> },
  { n: "Lock 3D view", g: <path d="M2 13V6l5-4 6 4M7 9h7v5H7zM9 9V7h3v2" fill="#ddd" /> },
  { n: "Hide", g: <path d="M1 5l4 6 3-3 6 1c2-3-1-5-4-4L7 3M5 11l2 2" /> },
  { n: "Reveal hidden", g: <path d="M8 2a3 3 0 0 1 2 5l-1 2H7L6 7a3 3 0 0 1 2-5zM7 11h2v3H7z" fill="#ddeaf2" stroke="#678" /> },
  { n: "View properties", g: <><path d="M1 3h13v9H1zM1 5h13" /><path d="M8 7l6 6M14 7l-6 7" strokeWidth="1.600" /></> },
  { n: "Analytical model", g: <><path d="M1 13V6l4-3 9 1v9zM5 3v10M9 4v9" fill="#bbb" /><path d="M10 8h5v4h-5z" fill="#f2da59" stroke="#998422" /></> },
  { n: "Displacement", g: <path d="M1 7l4-4h6v8l-4 3H1zM11 5h4v6h-4M1 7h6v7" fill="#ccc" /> },
  { n: "Constraints", g: <path d="M1 2v12M1 5h14M15 2v4M8 9h6v5H8zM9 9V7h4v2" /> },
];

function ViewArea() {
  return (
    <main className="flex min-w-0 flex-1 flex-col bg-white">
      <ViewTabs />
      <div className="flex min-h-0 flex-1">
        <div className="relative min-w-0 flex-1 overflow-hidden">
          <Model />
          <ViewCube />
          <NavBar />
        </div>
        <div className="flex w-[13px] shrink-0 flex-col items-center justify-between bg-[#f5f5f5] py-1">
          <ChevronUp size={10} strokeWidth={2.5} />
          <div className="h-[13px] w-full bg-[#cdcdcd]" />
          <ChevronDown size={10} strokeWidth={2.5} />
        </div>
      </div>
      <div className="flex h-[15px] shrink-0 items-center bg-[#f7f7f7]">
        <div className="flex w-[292px] items-center bg-white pl-[20px]">
          <span className="w-[39px] whitespace-nowrap">1 : 100</span>
          {viewControls.map((c) => (
            <button key={c.n} type="button" aria-label={c.n} className="flex w-4 min-w-0 justify-center"><Glyph size="h-3 w-3">{c.g}</Glyph></button>
          ))}
          <ChevronLeft size={9} strokeWidth={2.5} className="shrink-0" />
        </div>
        <div className="flex flex-1 justify-center"><span className="h-3 w-[13px] bg-[#cdcdcd]" /></div>
        <ChevronRight size={10} strokeWidth={2.5} className="mr-[14px]" />
      </div>
    </main>
  );
}

/* ---------- status bar ---------- */

function StatusBar() {
  return (
    <footer className="flex h-[18px] shrink-0 items-center border-t border-[#e6e6e6] bg-[#d0d0d0]">
      <span className="w-[666px] whitespace-nowrap">Structural Foundations : M_Footing-Rectangular : 1800 x 1200 x 450mm</span>
      <Tip label="Worksets"><Glyph size="h-[13px] w-[13px]"><path d="M1 7h5v7H1zM6 4l4-2 4 3v9h-3V7H9v5" fill="#9fd4de" stroke="#2c7c90" /></Glyph></Tip>
      <span className="ml-[3px] flex h-[14px] w-[152px] items-center bg-white">
        <select aria-label="Active workset" className="min-w-0 flex-1 appearance-none"><option> </option></select>
        <ChevronDown size={8} color="#aaa" className="mr-px" />
      </span>
      <Tip label="Editable only" w="ml-[5px] w-[18px]"><Glyph size="h-[13px] w-[13px]"><path d="M2 3h9l-5 6H2zM5 14l8-9" stroke="#9c9c9c" fill="#ddd" /></Glyph></Tip>
      <span className="w-[21px]">:0</span>
      <Tip label="Design options"><Glyph size="h-[13px] w-[13px]"><path d="M1 2h14v12H1zM7 7h6M7 11h6M3 7h2v1H3zM3 11h2v1H3z" /><path d="M1 3h14" strokeWidth="2.500" /></Glyph></Tip>
      <Tip label="Active option"><Glyph size="h-3 w-3"><path d="M2 2h13v12H2z" fill="#aaa" stroke="#999" /><path d="M7 4v8l4-3z" fill="#eee" /></Glyph></Tip>
      <span className="ml-[2px] flex h-[14px] w-[154px] items-center bg-[#f2f2f2] text-[#9a9a9a]">
        <select aria-label="Model" className="min-w-0 flex-1 appearance-none pl-[3px]"><option>Main Model</option></select>
        <ChevronDown size={8} color="#aaa" className="mr-px" />
      </span>
      <span className="flex-1" />
      <div className="flex items-center gap-px pr-[53px]">
        <Tip label="Select links"><Glyph size="h-[13px] w-[13px]"><path d="M1 4h13v4H1z" fill="#e6d254" stroke="#a8962c" /><path d="M7 6v9l3-2 2 2" fill="#fff" /></Glyph></Tip>
        <Tip label="Select underlay"><Glyph size="h-[13px] w-[13px]"><path d="M1 12l8-8v8z" fill="#a8c8dc" stroke="#3a7294" /><path d="M9 2l5 5M14 2L9 7" stroke="#c62d2d" strokeWidth="2" /><path d="M9 9v6l4-2" /></Glyph></Tip>
        <Tip label="Select pinned"><Glyph size="h-[13px] w-[13px]"><path d="M2 2h9v7H2zM6 9v5" fill="#f0a668" stroke="#b4662a" /><path d="M9 8v7l4-2" fill="#fff" /></Glyph></Tip>
        <Tip label="Select by face"><Glyph size="h-[13px] w-[13px]"><path d="M2 4h6v10H2z" fill="#cfe3f0" stroke="#3a7294" /><path d="M9 2l5 5M14 2L9 7" stroke="#c62d2d" strokeWidth="2" /><path d="M9 9v6l4-2" /></Glyph></Tip>
        <Tip label="Drag elements"><Glyph size="h-[13px] w-[13px]"><path d="M5 1v9M1 5h9M3 3l2-2 2 2" stroke="#222" /><path d="M9 6v9l2-2 3 2z" fill="#fff" /></Glyph></Tip>
        <Tip label="Background processes"><Glyph size="h-[13px] w-[13px]"><circle cx="8" cy="8" r="5" stroke="#b2b2b2" strokeWidth="2" /></Glyph></Tip>
        <Tip label="Filter" w="w-4"><Glyph size="h-[13px] w-[13px]"><path d="M1 2h14l-5 6v6l-4-2V8z" fill="#ddd" /></Glyph></Tip>
        <span>:0</span>
      </div>
    </footer>
  );
}

/* ---------- translucent marks over the whole window ---------- */

const latin = [[403, 122], [1193, 166], [895, 296], [603, 425], [298, 555], [1090, 610], [807, 742], [1403, 487], [100, 252], [2, 688], [697, -5], [1490, 40]];
const han = [[590, 232], [215, 383], [456, 712], [805, 552], [1180, 390], [966, 69], [13, 90], [1187, 768]];

function Marks() {
  return (
    <svg viewBox="0 0 1436 780" preserveAspectRatio="xMidYMid slice" className="pointer-events-none absolute inset-0 h-full w-full" aria-hidden="true">
      <defs>
        <linearGradient id="metal" x1="0" y1="0" x2="0" y2="1">
          <stop offset="0" stopColor="#f4f4f4" />
          <stop offset="1" stopColor="#9c9c9c" />
        </linearGradient>
        <filter id="rim" x="0" y="0" width="1436" height="780" filterUnits="userSpaceOnUse" colorInterpolationFilters="sRGB">
          <feGaussianBlur in="SourceAlpha" stdDeviation="1.2" result="soft" />
          <feComponentTransfer in="soft" result="outer"><feFuncA type="linear" slope="9" intercept="-.5" /></feComponentTransfer>
          <feComponentTransfer in="soft" result="inner"><feFuncA type="linear" slope="5" intercept="-2" /></feComponentTransfer>
          <feComposite in="outer" in2="inner" operator="out" result="edge" />
          <feFlood floodColor="#808080" floodOpacity=".24" />
          <feComposite in2="edge" operator="in" result="line" />
          <feFlood floodColor="#b0b0b0" floodOpacity=".09" />
          <feComposite in2="inner" operator="in" result="body" />
          <feMerge>
            <feMergeNode in="body" />
            <feMergeNode in="line" />
          </feMerge>
        </filter>
      </defs>
      <g filter="url(#rim)" textAnchor="middle" fill="#000" stroke="#000" strokeWidth="2" fontWeight="700" strokeLinejoin="round">
        {latin.map(([x, y], i) => (
          <text key={i} transform={`translate(${x} ${y}) rotate(-25)`} y="20" fontSize="56" fontFamily="'DejaVu Serif', serif">RRCG</text>
        ))}
        {han.map(([x, y], i) => (
          <text key={i} transform={`translate(${x} ${y}) rotate(-26)`} y="22" fontSize="60" strokeWidth="3" fontFamily="'Noto Sans CJK SC', sans-serif">人人素材</text>
        ))}
      </g>
      <text x="723" y="41" textAnchor="middle" fontSize="36" fontWeight="700" fontFamily="'Open Sans', sans-serif" fill="#888" fillOpacity=".38">www.rrcg.cn</text>
      <circle cx="650" cy="748" r="17" fill="#f3f3f3" fillOpacity=".85" stroke="url(#metal)" strokeWidth="5" />
      <path d="M636 757l6-16 7 12 6-12 4 14h9l-2 4h-10l-3-9-5 9-6-9-3 8z" fill="#5b97d8" />
      <path d="M664 738a18 18 0 1 0 2 18" fill="none" stroke="#9a9a9a" strokeWidth="3" />
      <text x="680" y="760" fontSize="33" fontWeight="900" fontFamily="'Noto Sans CJK SC', sans-serif" fill="url(#metal)" stroke="#aaa" strokeWidth=".6">人人素材</text>
    </svg>
  );
}

export default function App() {
  return (
    <div className="relative flex h-screen w-full flex-col overflow-hidden bg-[#f5f5f5] font-['Open_Sans','Noto_Sans',sans-serif] text-[9px] text-[#3c3c3c]">
      <TitleBar />
      <MenuTabs />
      <Ribbon />
      <div className="h-5 shrink-0 border-b border-[#c8c8c8] bg-[#f5f5f5]" />
      <div className="flex min-h-0 flex-1">
        <aside className="flex w-[163px] shrink-0 flex-col border-r border-[#bdbdbd] bg-[#f5f5f5]">
          <Properties />
          <Browser />
        </aside>
        <ViewArea />
      </div>
      <StatusBar />
      <Marks />
    </div>
  );
}
